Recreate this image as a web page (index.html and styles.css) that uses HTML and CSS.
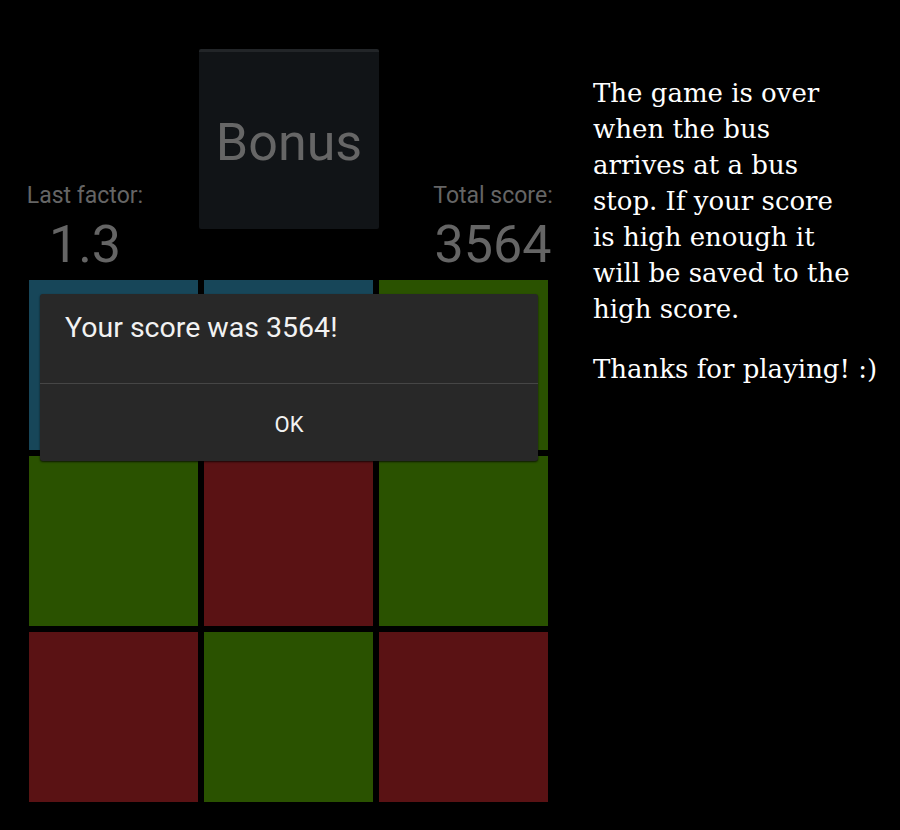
FILE: index.html
```html
<!DOCTYPE html>
<html>
<head>
<meta charset="utf-8">
<link rel="stylesheet" href="styles.css">
</head>
<body>
<div class="page">
  <div class="game">
    <div class="header">
      <div class="stat">
        <div class="stat-label">Last factor:</div>
        <div class="stat-value">1.3</div>
      </div>
      <div class="bonus">Bonus</div>
      <div class="stat">
        <div class="stat-label">Total score:</div>
        <div class="stat-value">3564</div>
      </div>
    </div>
    <div class="board">
      <div class="grid">
        <div class="tile blue"></div>
        <div class="tile blue"></div>
        <div class="tile green"></div>
        <div class="tile green"></div>
        <div class="tile red"></div>
        <div class="tile green"></div>
        <div class="tile red"></div>
        <div class="tile green"></div>
        <div class="tile red"></div>
      </div>
      <div class="dialog">
        <div class="dialog-msg">Your score was 3564!</div>
        <div class="dialog-btn">OK</div>
      </div>
    </div>
  </div>
  <div class="info">
    <p class="info-p">The game is over when the bus arrives at a bus stop. If your score is high enough it will be saved to the high score.</p>
    <p class="info-p nowrap">Thanks for playing! :)</p>
  </div>
</div>
</body>
</html>
```
FILE: styles.css
```css
html, body {
  margin: 0;
  padding: 0;
  background: #000;
}
.page {
  display: flex;
  width: 900px;
  height: 830px;
}
.game {
  width: 578px;
  padding-top: 49px;
  font-family: Roboto, "Liberation Sans", sans-serif;
}
.header {
  display: flex;
  justify-content: center;
  gap: 30px;
  height: 231px;
}
.stat {
  width: 168px;
  padding-top: 133px;
  text-align: center;
  color: #656565;
}
.stat-label {
  font-size: 23px;
  line-height: 27px;
}
.stat-value {
  font-size: 52px;
  line-height: 52px;
  margin-top: 10px;
}
.bonus {
  width: 180px;
  height: 180px;
  box-sizing: border-box;
  background: #111417;
  border-top: 3px solid #222528;
  border-radius: 2px;
  display: flex;
  align-items: center;
  justify-content: center;
  color: #666;
  font-size: 52px;
  padding-top: 4px;
}
.board {
  position: relative;
  padding-left: 29px;
}
.grid {
  display: grid;
  grid-template-columns: repeat(3, 169px);
  grid-template-rows: repeat(3, 170px);
  gap: 6px;
}
.tile.blue { background: #174659; }
.tile.green { background: #2a5200; }
.tile.red { background: #5a1214; }
.dialog {
  position: absolute;
  left: 40px;
  top: 14px;
  width: 498px;
  background: #282828;
  border-radius: 3px;
  box-shadow: 0 1px 2px rgba(0,0,0,0.7);
}
.dialog-msg {
  height: 90px;
  box-sizing: border-box;
  padding: 17px 0 0 25px;
  font-size: 28.5px;
  line-height: 34px;
  color: #f2f2f2;
  border-bottom: 1px solid #464646;
}
.dialog-btn {
  height: 77px;
  display: flex;
  align-items: center;
  justify-content: center;
  font-size: 22px;
  color: #f2f2f2;
  padding-top: 3px;
  box-sizing: border-box;
}
.info {
  padding-left: 15px;
  padding-top: 75px;
  width: 266px;
}
.info-p {
  margin: 0 0 24px 0;
  font-family: "DejaVu Serif", "Liberation Serif", serif;
  font-size: 26px;
  line-height: 36px;
  color: #fff;
}
.nowrap {
  white-space: nowrap;
}
```
